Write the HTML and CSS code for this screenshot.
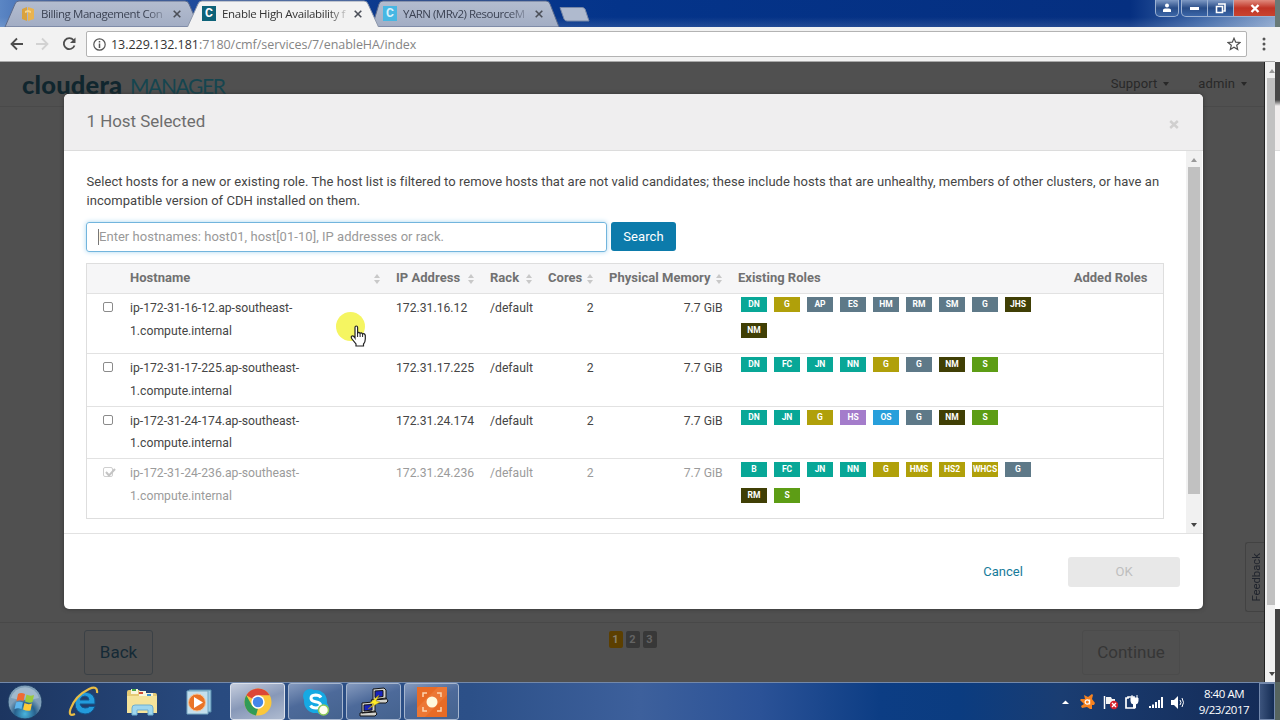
FILE: index.html
```html
<!DOCTYPE html>
<html lang="en">
<head>
<meta charset="utf-8">
<title>Enable High Availability</title>
<link rel="stylesheet" href="styles.css">
</head>
<body>
<div class="screen">
  <header class="tabstrip">
    <svg class="tab-shapes" width="600" height="27" viewBox="0 0 600 27">
      <defs><linearGradient id="tabFill" x1="0" y1="0" x2="0" y2="1"><stop offset="0" stop-color="#b4bdcf"/><stop offset="1" stop-color="#a2adc4"/></linearGradient></defs>
      <path d="M5 27 L15 4 Q16 1 19 1 H185 Q188 1 189 4 L199 27Z" fill="url(#tabFill)" stroke="#5c6b8c"/>
      <path d="M372 27 L379 4 Q380 1 383 1 H546 Q549 1 550 4 L559 27Z" fill="url(#tabFill)" stroke="#5c6b8c"/>
      <path d="M187 28 L198 4 Q199 1 202 1 H364 Q367 1 368 4 L379 28Z" fill="#f2f2f2" stroke="#8d97ab"/>
      <path d="M560 7.500H582Q584 7.500 585 9L589 21H567Q565 21 564 19Z" fill="#afbace" stroke="#7787a6"/>
    </svg>
    <div class="tab tab-a"><svg width="14" height="14" viewBox="0 0 14 14"><path d="M1 2L6 0V14L1 12Z" fill="#d9a23e"/><path d="M7 0L13 2V12L7 14Z" fill="#e9b34f"/><path d="M4 4L7 3L10 4V6L7 5L4 6Z" fill="#f7d58b"/></svg><span class="tab-title">Billing Management Con</span><svg class="x" width="8" height="8" viewBox="0 0 8 8"><path d="M.7.7L7.300 7.300M7.300.7L.7 7.300"/></svg></div>
    <div class="tab tab-b"><span class="fav">C</span><span class="tab-title">Enable High Availability f</span><svg class="x" width="8" height="8" viewBox="0 0 8 8"><path d="M.7.7L7.300 7.300M7.300.7L.7 7.300"/></svg></div>
    <div class="tab tab-c"><span class="fav light">C</span><span class="tab-title">YARN (MRv2) ResourceM</span><svg class="x" width="8" height="8" viewBox="0 0 8 8"><path d="M.7.7L7.300 7.300M7.300.7L.7 7.300"/></svg></div>
    <div class="winctl">
      <span class="wbtn user"><svg width="10" height="10" viewBox="0 0 10 10"><circle cx="5" cy="2.500" r="2" fill="#fff"/><path d="M1 9V7Q1 5.500 3 5.500H7Q9 5.500 9 7V9Z" fill="#fff"/></svg></span>
      <span class="wbtn min"><i></i></span>
      <span class="wbtn max"><svg width="11" height="11" viewBox="0 0 11 11"><path d="M3 1H10V8H8.500M1.500 3.500H7.500V9.500H1.500Z" fill="none" stroke="#fff" stroke-width="1.600"/></svg></span>
      <span class="wbtn close"><svg width="10" height="9" viewBox="0 0 10 9"><path d="M1.500 1L8.500 8M8.500 1L1.500 8" stroke="#fff" stroke-width="2.400"/></svg></span>
    </div>
  </header>

  <div class="toolbar">
    <svg class="nav" width="74" height="16" viewBox="0 0 74 16" fill="none" stroke-width="1.800">
      <path d="M16 8H4.500M10 2.500L4.500 8L10 13.500" stroke="#4d4d4d"/>
      <path d="M29 8H40.500M35 2.500L40.500 8L35 13.500" stroke="#d2d2d2"/>
      <path d="M66.500 4A5.500 5.500 0 1 0 67.500 9.500" stroke="#4d4d4d"/><path d="M68.500 1.500V7H63Z" fill="#4d4d4d"/>
    </svg>
    <div class="omnibox">
      <svg width="13" height="13" viewBox="0 0 13 13"><circle cx="6.500" cy="6.500" r="5.700" fill="none" stroke="#555" stroke-width="1.200"/><path d="M6.500 5.500V10M6.500 3V4.500" stroke="#555" stroke-width="1.500"/></svg>
      <span class="url"><b>13.229.132.181</b>:7180/cmf/services/7/enableHA/index</span>
      <svg class="star" width="14" height="14" viewBox="0 0 14 14"><path d="M7 1.200L8.700 5.200L13 5.500L9.700 8.300L10.700 12.500L7 10.200L3.300 12.500L4.300 8.300L1 5.500L5.300 5.200Z" fill="none" stroke="#505050" stroke-width="1.200"/></svg>
    </div>
    <svg class="dots" width="4" height="14" viewBox="0 0 4 14" fill="#555"><circle cx="2" cy="2" r="1.500"/><circle cx="2" cy="7" r="1.500"/><circle cx="2" cy="12" r="1.500"/></svg>
  </div>

  <main class="page">
    <div class="viewport">
      <div class="cm-header">
        <div class="logo"><span class="cloudera">cloudera</span><span class="manager">MANAGER</span></div>
        <div class="cm-menu"><span>Support<i class="caret"></i></span><span>admin<i class="caret"></i></span></div>
      </div>
      <div class="cm-footer">
        <span class="back">Back</span>
        <span class="steps"><i class="on">1</i><i>2</i><i>3</i></span>
        <span class="continue">Continue</span>
      </div>
      <div class="feedback"><span>Feedback</span></div>

      <section class="modal">
        <div class="modal-head"><h1>1 Host Selected</h1><svg width="10" height="9" viewBox="0 0 10 9"><path d="M1.200 1L8.800 8M8.800 1L1.200 8" stroke="#d0cfcf" stroke-width="2.500"/></svg></div>
        <div class="modal-main">
          <div class="modal-content">
            <p class="intro"><span class="l1">Select hosts for a new or existing role. The host list is filtered to remove hosts that are not valid candidates; these include hosts that are unhealthy, members of other clusters, or have an</span><br><span class="l2">incompatible version of CDH installed on them.</span></p>
            <div class="search"><div class="field"><i class="bar"></i><span>Enter hostnames: host01, host[01-10], IP addresses or rack.</span></div><div class="btn">Search</div></div>
            <div class="table">
              <div class="row head">
                <div></div>
                <div class="sort"><span>Hostname</span><svg width="6" height="10" viewBox="0 0 6 10"><path d="M3 0L6 4H0ZM3 10L0 6H6Z"/></svg></div>
                <div class="sort"><span>IP Address</span><svg width="6" height="10" viewBox="0 0 6 10"><path d="M3 0L6 4H0ZM3 10L0 6H6Z"/></svg></div>
                <div class="sort"><span>Rack</span><svg width="6" height="10" viewBox="0 0 6 10"><path d="M3 0L6 4H0ZM3 10L0 6H6Z"/></svg></div>
                <div class="sort"><span>Cores</span><svg width="6" height="10" viewBox="0 0 6 10"><path d="M3 0L6 4H0ZM3 10L0 6H6Z"/></svg></div>
                <div class="sort"><span>Physical Memory</span><svg width="6" height="10" viewBox="0 0 6 10"><path d="M3 0L6 4H0ZM3 10L0 6H6Z"/></svg></div>
                <div>Existing Roles</div>
                <div class="num">Added Roles</div>
              </div>
              <div class="row tall"><div><i class="check"></i></div><div>ip-172-31-16-12.ap-southeast-<br>1.compute.internal</div><div>172.31.16.12</div><div>/default</div><div class="num">2</div><div class="num">7.7 GiB</div>
                <div class="roles"><b class="hdfs">DN</b><b class="hive">G</b><b class="mgmt">AP</b><b class="mgmt">ES</b><b class="mgmt">HM</b><b class="mgmt">RM</b><b class="mgmt">SM</b><b class="mgmt">G</b><b class="yarn">JHS</b><b class="yarn">NM</b></div><div></div></div>
              <div class="row"><div><i class="check"></i></div><div>ip-172-31-17-225.ap-southeast-<br>1.compute.internal</div><div>172.31.17.225</div><div>/default</div><div class="num">2</div><div class="num">7.7 GiB</div>
                <div class="roles"><b class="hdfs">DN</b><b class="hdfs">FC</b><b class="hdfs">JN</b><b class="hdfs">NN</b><b class="hive">G</b><b class="mgmt">G</b><b class="yarn">NM</b><b class="zk">S</b></div><div></div></div>
              <div class="row"><div><i class="check"></i></div><div>ip-172-31-24-174.ap-southeast-<br>1.compute.internal</div><div>172.31.24.174</div><div>/default</div><div class="num">2</div><div class="num">7.7 GiB</div>
                <div class="roles"><b class="hdfs">DN</b><b class="hdfs">JN</b><b class="hive">G</b><b class="hue">HS</b><b class="oozie">OS</b><b class="mgmt">G</b><b class="yarn">NM</b><b class="zk">S</b></div><div></div></div>
              <div class="row tall off"><div><i class="check"><svg width="12" height="10" viewBox="0 0 12 10"><path d="M2 4L5 7.500L11 1" fill="none" stroke="#c4c4c4" stroke-width="2"/></svg></i></div><div>ip-172-31-24-236.ap-southeast-<br>1.compute.internal</div><div>172.31.24.236</div><div>/default</div><div class="num">2</div><div class="num">7.7 GiB</div>
                <div class="roles"><b class="hdfs">B</b><b class="hdfs">FC</b><b class="hdfs">JN</b><b class="hdfs">NN</b><b class="hive">G</b><b class="hive">HMS</b><b class="hive">HS2</b><b class="hive">WHCS</b><b class="mgmt">G</b><b class="yarn">RM</b><b class="zk">S</b></div><div></div></div>
            </div>
          </div>
          <div class="modal-scroll"><i class="up"></i><i class="thumb"></i><i class="down"></i></div>
        </div>
        <div class="modal-foot"><span class="cancel">Cancel</span><span class="ok">OK</span></div>
      </section>
    </div>
    <div class="page-scroll"><i class="up"></i><i class="thumb"></i><i class="down"></i></div>
  </main>

  <footer class="taskbar">
    <div class="pins">
      <svg width="36" height="36" viewBox="0 0 36 36">
        <defs><radialGradient id="orb" cy=".85"><stop offset="0" stop-color="#49b5dd"/><stop offset=".6" stop-color="#28618d"/><stop offset="1" stop-color="#7f9fb9"/></radialGradient></defs>
        <circle cx="18" cy="18" r="17" fill="url(#orb)" stroke="#1d3c63"/><path d="M4 14A14.500 14.500 0 0 1 32 14Q18 18 4 14Z" fill="#d2e1ec" opacity=".4"/>
        <path d="M11 10Q14 8 18 10L16.500 17Q13 15.500 9.500 17Z" fill="#ef6a33"/><path d="M19.500 10.500Q23 12.500 27 11L25.500 18Q22 19.500 18 17.500Z" fill="#9acb3d"/><path d="M9 18.500Q12.500 17 16 18.500L14.500 25Q11 23.500 7.500 25Z" fill="#5eb6ee"/><path d="M17.500 19Q21 21 25 19.500L23.500 26.500Q20 27.500 16 25.500Z" fill="#fdca38"/>
      </svg>
      <svg width="34" height="32" viewBox="0 0 34 32"><path fill-rule="evenodd" d="M28 18H13Q14 22 18 22Q21 22 22.500 20.500H28Q25 28 18 28Q8 27 8 17Q9 7 18 6Q29 7 28 18ZM13 14H22Q22 10.500 18 10Q14 10 13 14Z" fill="#239bdc" stroke="#12568f"/><path d="M8 28Q1 31 3.500 23Q8 10 22 3Q31 -1 30 7" fill="none" stroke="#e9bd45" stroke-width="2.200"/></svg>
      <svg width="32" height="30" viewBox="0 0 32 30"><path d="M1 5Q1 3 3 3H13L16 6H29Q31 6 31 8V25H1Z" fill="#e5ca75"/><path d="M5 2H12V7H5ZM13 4H20V9H13ZM20 6H27V10H20Z" fill="#f8f5dc"/><path d="M6 2h4v2H6z" fill="#45a545"/><path d="M13 5h4v2h-4z" fill="#d14c35"/><path d="M21 7h4v2h-4z" fill="#3e91cf"/><path d="M1 9H31V26H1Z" fill="#f5e39a"/><path d="M6 28V21Q6 18 9 18H24Q27 18 27 21V28H22V23H11V28Z" fill="#9ed6ee" stroke="#6caed1"/></svg>
      <svg width="28" height="28" viewBox="0 0 28 28"><path d="M4 2H26V24H4Z" fill="#9fcbe3" stroke="#568bac"/><path d="M2 3H23V26H2Z" fill="#c4dfed" stroke="#76a8c3"/><circle cx="12" cy="14.500" r="8.500" fill="#ea7427" stroke="#f6c396"/><path d="M9 9L18 14.500L9 20Z" fill="#fff"/></svg>
    </div>
    <div class="tasks">
      <span class="task active"><svg width="28" height="28" viewBox="0 0 28 28"><circle cx="14" cy="14" r="13.500" fill="#fbc73b"/><path d="M14 14L2.300 7.300A13.500 13.500 0 0 1 25.700 7.300H14Z" fill="#dc4637"/><path d="M2.300 7.300L8 17.500Q10 20.500 14 20.500L12 27.400A13.500 13.500 0 0 1 2.300 7.300Z" fill="#319b57"/><circle cx="14" cy="14" r="6.700" fill="#fff"/><circle cx="14" cy="14" r="5.200" fill="#4386e8"/></svg></span>
      <span class="task"><svg width="28" height="28" viewBox="0 0 28 28"><circle cx="13.500" cy="13.500" r="11.500" fill="#16a9e3"/><circle cx="8" cy="8" r="7" fill="#16a9e3"/><circle cx="19.500" cy="19.500" r="7" fill="#16a9e3"/><path d="M19 9.500Q17.500 7 13.500 7Q9 7.200 9 10.300Q9 13 13.500 13.700Q18.500 14.500 18.500 17Q18 20 14 20Q10 20 8.500 17.500" fill="none" stroke="#fff" stroke-width="3"/><circle cx="21.500" cy="22" r="5" fill="#fffef1" stroke="#8dca58" stroke-width="1.500"/></svg></span>
      <span class="task"><svg width="30" height="30" viewBox="0 0 30 30"><g stroke="#151515"><path d="M14 2L25 1L27 3V12L14 13ZM12 13L27 11L29 14L27 16H14Z" fill="#d2d2ce"/><path d="M16 4L24 3.500V9.500L16 10.500Z" fill="#1823bd"/><path d="M3 16L14 15L16 17V25L3 26ZM1 26L16 24L18 27L16 29H1Z" fill="#d2d2ce"/><path d="M5 18L13 17.500V23L5 24Z" fill="#1823bd"/></g><path d="M20 8L11 16L15 17L9 22L21 15L17 14Z" fill="#ffec27" stroke="#a58b10" stroke-width=".5"/></svg></span>
      <span class="task"><svg width="30" height="30" viewBox="0 0 30 30"><path d="M0 0H30V30H0Z" fill="#e86b25"/><path d="M0 21L21 0H30V8L8 30H0Z" fill="#f08343" opacity=".5"/><path d="M6 10V6H10M20 6H24V10M24 20V24H20M10 24H6V20" fill="none" stroke="#fbd5ae" stroke-width="1.500"/><circle cx="15" cy="15" r="5.500" fill="#fff8db"/></svg></span>
    </div>
    <div class="tray">
      <svg width="126" height="18" viewBox="0 0 126 18">
        <path d="M1 11L4.500 7.500L8 11Z" fill="#fff"/>
        <g transform="translate(19 1)"><path d="M4 1L8 3L12 0L13 1L12 5L15 9L14 11L12 11L12 15L10 15L7 13L2 14L1 12L4 10L0 6L1 5L5 5Z" fill="#f58220"/><circle cx="7.300" cy="8" r="2.200" fill="none" stroke="#fff" stroke-width="1.200"/><path d="M9.700 5.500V10.500" stroke="#fff"/></g>
        <path d="M43.500 3V16" stroke="#fff" stroke-width="1.500"/><path d="M45 4H50L51 6H54V11H45Z" fill="#f4f4f4"/><circle cx="53" cy="12" r="4.200" fill="#d4202d"/><path d="M51 10L55 14M55 10L51 14" stroke="#fff" stroke-width="1.300"/>
        <path d="M67 4H73V15H65V5H67Z" fill="none" stroke="#fff" stroke-width="1.700"/><path d="M70 5H77V8Q77 11 74.500 11V15H72.500V11Q70 11 70 8ZM71 2V5M76 2V5" fill="#fff" stroke="#fff"/>
        <path d="M88 13H90V15H88ZM91 11.500H93V15H91ZM94 9H96V15H94ZM97 7H99V15H97ZM100 4H102V15H100Z" fill="#fff"/>
        <path d="M110 7H113L117 3V16L113 12H110Z" fill="#fff"/><path d="M119 7Q121 9.500 119 12M121 5Q124 9.500 121 14" fill="none" stroke="#fff"/>
      </svg>
      <div class="clock"><span>8:40 AM</span><span>9/23/2017</span></div>
      <i class="desk"></i>
    </div>
  </footer>

  <div class="edge"></div>
  <div class="halo"></div>
  <svg class="hand" width="17" height="22" viewBox="0 0 17 22"><path d="M5 12V2.500Q5 1 6.300 1Q7.600 1 7.600 2.500V8Q9 6.500 10 8.300Q11.500 7 12.500 9Q14.700 8 15.300 10.500V14Q15.300 17 13.500 19V21H6V19L2 14Q.5 11.500 2 11Q3.500 10.500 5 13Z" fill="#fff" stroke="#222" stroke-width="1.200"/><path d="M7.600 8V12M10.100 8.500V12M12.600 9V12" stroke="#222"/></svg>
</div>
</body>
</html>
```
FILE: styles.css
```css
* { box-sizing: border-box; }
body { margin: 0; background: #505050; }
i { font-style: normal; display: block; }
svg { display: block; flex: none; }
.screen { position: relative; width: 1280px; height: 720px; overflow: hidden; display: flex; flex-direction: column; font-family: Roboto, "Liberation Sans", sans-serif; font-size: 13px; color: #454545; white-space: nowrap; }

.tabstrip { position: relative; height: 27px; flex: none; display: flex; background: linear-gradient(transparent 17px, rgba(255,255,255,.12)), linear-gradient(90deg, #5b86c4 0, #2e59a6 60px, #0c3a8e 380px, #04348a 620px, #052f80 1130px, #3f68a8 1200px, #8fa9cf 1280px); font-family: "Open Sans", "Noto Sans", sans-serif; font-size: 11.5px; color: #3c4354; }
.tab-shapes { position: absolute; left: 0; top: 0; }
.tab { position: relative; display: flex; align-items: center; height: 27px; }
.tab-a { width: 181px; margin-left: 21px; }
.tab-b { width: 181px; color: #333; }
.tab-c { width: 160px; }
.tab-title { margin-left: 6px; width: 126px; letter-spacing: -0.3px; -webkit-mask-image: linear-gradient(90deg, #000 106px, rgba(0,0,0,.2) 124px); mask-image: linear-gradient(90deg, #000 106px, rgba(0,0,0,.2) 124px); }
.tab-a .tab-title { letter-spacing: -0.42px; }
.tab-c .tab-title { letter-spacing: -0.5px; }
.x { margin-left: auto; fill: none; stroke: #4b4f58; stroke-width: 1.6; }
.tab-a .x { margin-right: 21px; }
.tab-b .x { margin-right: 21px; }
.tab-c .x { margin-right: 0; }
.fav { width: 14px; height: 15px; flex: none; background: #0e6379; color: #fff; font: bold 12px/15px Roboto, sans-serif; text-align: center; }
.fav.light { background: #47b7e3; color: #d8f1fb; }
.winctl { display: flex; height: 17px; margin-left: auto; margin-right: 3px; }
.wbtn { display: flex; align-items: center; justify-content: center; height: 17px; border: 1px solid #9db2d2; border-top: 0; background: linear-gradient(#7e99c4, #284c87 50%, #3b66a8); }
.wbtn.user { width: 24px; border-radius: 0 0 5px 5px; margin-right: 2px; }
.wbtn.min { width: 27px; border-radius: 0 0 0 5px; }
.wbtn.min i { width: 9px; height: 3px; background: #fff; }
.wbtn.max { width: 26px; border-left: 0; }
.wbtn.close { width: 43px; border-left: 0; background: linear-gradient(#e08b7e, #c03426 50%, #c9442f); }

.toolbar { display: flex; align-items: center; height: 35px; flex: none; background: #f2f2f2; border-bottom: 1px solid #a9a9a9; }
.nav { margin-left: 7px; }
.omnibox { display: flex; align-items: center; width: 1161px; height: 26px; margin-left: 5px; padding: 0 5px 0 6px; background: #fff; border: 1px solid #b3b3b3; border-radius: 2px; }
.url { margin-left: 5px; font-family: "Open Sans", "Noto Sans", sans-serif; font-size: 12.5px; letter-spacing: -0.04px; color: #858585; }
.url b { font-weight: normal; color: #333; }
.star { margin-left: auto; }
.dots { margin-left: 15px; }

.page { display: flex; height: 620px; flex: none; }
.viewport { position: relative; display: flex; flex-direction: column; justify-content: space-between; width: 1265px; background: #505050; border-right: 1px solid #222; }
.cm-header { display: flex; justify-content: space-between; height: 45px; padding: 0 17px 0 22px; border-bottom: 1px solid #494949; }
.logo { display: flex; align-items: center; height: 44px; font-family: Lato, sans-serif; color: #10262e; }
.cloudera { width: 108px; font-size: 25.5px; font-weight: 900; letter-spacing: .2px; }
.manager { margin-top: 2px; font-size: 21px; color: #15454f; letter-spacing: -1.4px; }
.cm-menu { display: flex; gap: 29px; align-items: center; height: 43px; color: #282828; letter-spacing: .1px; }
.cm-menu span { display: flex; align-items: center; gap: 6px; }
.caret { width: 0; border: 3.5px solid transparent; border-top: 4px solid #282828; border-bottom: 0; }
.cm-footer { display: flex; justify-content: space-between; align-items: flex-start; height: 60px; border-top: 1px solid #484848; padding: 7px 84px 0 84px; font-size: 17px; color: #152a36; }
.back, .continue { height: 45px; border: 1px solid #3b4146; border-radius: 3px; line-height: 43px; text-align: center; }
.back { width: 69px; }
.continue { width: 98px; border-color: #4b4b4b; color: #363636; }
.steps { display: flex; gap: 3px; margin-left: 30px; padding-top: 1px; }
.steps i { width: 14px; height: 17px; border-radius: 2px; background: #383838; color: #646464; font: bold 11px/17px Roboto, sans-serif; text-align: center; }
.steps .on { background: #5c3f00; color: #877f6d; }
.feedback { position: absolute; right: 0; top: 480px; width: 19px; height: 70px; display: flex; align-items: center; justify-content: center; padding-left: 2px; border: 1px solid #424242; border-right: 0; color: #20242d; font-size: 11.3px; border-radius: 3px 0 0 3px; }
.feedback span { writing-mode: vertical-rl; transform: rotate(180deg); }

.modal { position: absolute; left: 64px; top: 32px; width: 1139px; height: 515px; display: flex; flex-direction: column; background: #fff; border-radius: 5px; overflow: hidden; box-shadow: 0 0 4px #333; }
.modal-head { display: flex; align-items: center; justify-content: space-between; height: 57px; padding: 0 24px 0 22.500px; background: #efeeef; border-bottom: 1px solid #dcdcdc; }
.modal-head h1 { margin: 0 0 2px; font-size: 16.9px; font-weight: normal; color: #6d6d6d; }
.modal-head svg { margin-top: 4px; }
.modal-main { display: flex; height: 383px; border-bottom: 1px solid #e2e2e2; }
.modal-content { width: 1100px; margin-right: 22px; padding: 21px 0 0 22px; }
.intro { margin: 0; padding-left: .5px; line-height: 19px; letter-spacing: .053px; }
.search { display: flex; gap: 4px; margin-top: 12px; height: 30px; }
.field { display: flex; align-items: center; width: 521px; padding: 0 0 1px 11px; border: 1px solid #72b5dd; border-radius: 3px; box-shadow: 0 0 5px #a9d6f0; color: #999; letter-spacing: .04px; }
.bar { width: 1px; height: 16px; background: #777; }
.btn { width: 65px; height: 29px; border-radius: 3px; background: #0c7bab; color: #fff; line-height: 29px; text-align: center; letter-spacing: .1px; }
.table { width: 1078px; margin-top: 11px; border: 1px solid #dedede; }
.row { display: grid; grid-template-columns: 43px 266px 94px 58px 61px 129px 305px 1fr; height: 52.500px; padding-top: 3px; border-top: 1px solid #e2e2e2; font-size: 12.2px; line-height: 22.500px; }
.row.tall { height: 60px; }
.row.head { height: 29px; padding-top: 0; border: 0; background: #f6f6f7; color: #717171; font-size: 13px; font-weight: bold; line-height: 28px; }
.sort { display: flex; align-items: center; justify-content: space-between; height: 28px; padding-right: 16px; letter-spacing: .03px; }
.sort svg { margin-top: 2px; fill: #c8c8c8; }
.num { text-align: right; padding-right: 15.5px; }
.check { width: 10px; height: 10px; margin: 5px 0 0 15.5px; border: 1px solid #8b8b8b; border-radius: 2px; background: #fff; }
.off { color: #9b9b9b; }
.off .check { border-color: #cfcfcf; }
.roles { display: flex; flex-wrap: wrap; align-content: flex-start; gap: 11px 7px; padding-left: 3px; }
.roles b { width: 26px; height: 15px; color: #fff; font-size: 8.5px; line-height: 15px; text-align: center; }
.hdfs { background: #08a797; }
.hive { background: #b0a00a; }
.mgmt { background: #5e7988; }
.yarn { background: #403f05; }
.zk { background: #5d9d15; }
.hue { background: #a47ccb; }
.oozie { background: #289fdb; }
.modal-scroll { display: flex; flex-direction: column; align-items: center; width: 16px; background: #f1f1f1; }
.up, .down { width: 0; border: 3.5px solid transparent; }
.up { border-top: 0; border-bottom: 4px solid #999; }
.down { border-bottom: 0; border-top: 4px solid #444; }
.modal-scroll .up { margin-top: 7px; }
.modal-scroll .thumb { width: 12px; height: 327px; margin-top: 5px; background: #c1c1c1; }
.modal-scroll .down { margin-top: auto; margin-bottom: 6px; }
.modal-foot { display: flex; align-items: center; justify-content: flex-end; gap: 45px; height: 75px; padding-right: 23px; }
.cancel { color: #177b9a; letter-spacing: .03px; }
.ok { width: 112px; height: 30px; border-radius: 3px; background: #e8e8e8; color: #bebebe; line-height: 29px; text-align: center; }
.page-scroll { display: flex; flex-direction: column; align-items: flex-end; width: 10px; background: #f0f0f0; }
.page-scroll .up { margin-top: 7px; }
.page-scroll .thumb { width: 8px; height: 527px; margin-top: 5px; background: #c1c1c1; }
.page-scroll .down { margin-top: auto; margin-bottom: 6px; }

.taskbar { display: flex; height: 38px; flex: none; background: linear-gradient(90deg, #1c3560 0, #294b80 220px, #2c5088 470px, #3d609c 640px, #2b5297 760px, #0c3d84 880px, #0b3c80 960px, #1a3d72 1060px, #142a55 1280px); border-top: 1px solid #7388a9; }
.pins { display: flex; align-items: center; width: 230px; padding-left: 7px; }
.pins svg:nth-child(2) { margin-left: 24px; }
.pins svg:nth-child(3) { margin-left: 25px; }
.pins svg:nth-child(4) { margin-left: 27px; }
.tasks { display: flex; gap: 3px; }
.task { display: flex; align-items: center; justify-content: center; width: 55px; height: 37px; border: 1px solid #a6b6cf; border-radius: 3px; background: linear-gradient(160deg, #8499bd, #4d6a9a 45%, #45638f); }
.task.active { background: linear-gradient(160deg, #c5cddd, #8798b8 50%, #afbbd0); border-color: #dae0eb; }
.tray { display: flex; align-items: center; margin-left: auto; margin-right: 5px; color: #fff; }
.clock { display: flex; flex-direction: column; align-items: center; width: 54px; margin-left: 10px; margin-right: 8px; font-family: "Open Sans", "Noto Sans", sans-serif; font-size: 11.5px; line-height: 16px; letter-spacing: -0.45px; }
.desk { width: 16px; height: 37px; border: 1px solid #7489ad; background: linear-gradient(90deg, #3c547d, #132b53); }
.edge { position: absolute; left: 1275px; top: 0; width: 5px; height: 720px; background: linear-gradient(#697a78 0 27px, #f2f2f2 27px 62px, #484848 62px 100px, #f1eeee 106px 150px, #ddd 150px 151px, #fff 151px 609px, #444 609px 682px, #56645f 682px); }
.halo { position: absolute; left: 336px; top: 312px; width: 29px; height: 29px; border-radius: 50%; background: #f5f561; }
.hand { position: absolute; left: 350px; top: 325px; }
```
